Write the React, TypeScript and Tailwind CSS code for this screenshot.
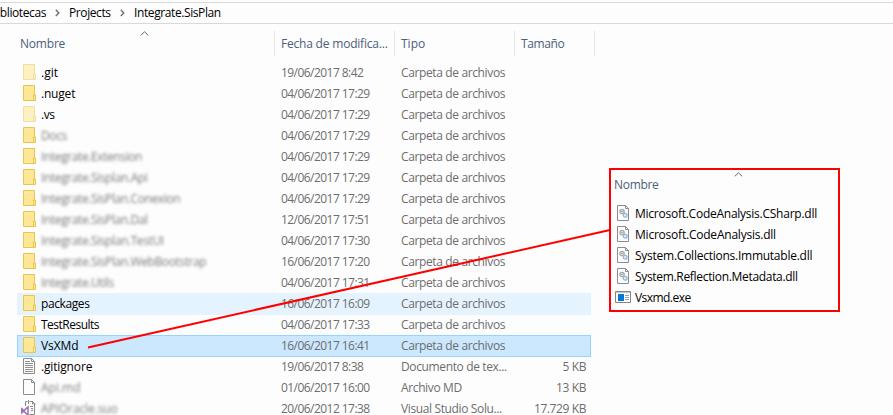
import React from 'react';

type Kind = 'folder' | 'faded' | 'text' | 'blank' | 'solution' | 'dll' | 'exe';

interface Entry {
  name: string;
  date: string;
  type: string;
  size?: string;
  kind: Kind;
  blurred?: boolean;
  state?: 'hover' | 'selected';
  track?: string;
}

const FOLDER = 'Carpeta de archivos';

const entries: Entry[] = [
  { name: '.git', date: '19/06/2017 8:42', type: FOLDER, kind: 'faded', track: 'tracking-normal' },
  { name: '.nuget', date: '04/06/2017 17:29', type: FOLDER, kind: 'folder', track: 'tracking-[-0.2px]' },
  { name: '.vs', date: '04/06/2017 17:29', type: FOLDER, kind: 'faded', track: 'tracking-[-0.4px]' },
  { name: 'Docs', date: '04/06/2017 17:29', type: FOLDER, kind: 'folder', blurred: true },
  { name: 'Integrate.Extension', date: '04/06/2017 17:29', type: FOLDER, kind: 'folder', blurred: true },
  { name: 'Integrate.Sisplan.Api', date: '04/06/2017 17:29', type: FOLDER, kind: 'folder', blurred: true },
  { name: 'Integrate.SisPlan.Conexion', date: '04/06/2017 17:29', type: FOLDER, kind: 'folder', blurred: true },
  { name: 'Integrate.SisPlan.Dal', date: '12/06/2017 17:51', type: FOLDER, kind: 'folder', blurred: true },
  { name: 'Integrate.Sisplan.TestUI', date: '04/06/2017 17:30', type: FOLDER, kind: 'folder', blurred: true },
  { name: 'Integrate.SisPlan.WebBootstrap', date: '16/06/2017 17:20', type: FOLDER, kind: 'folder', blurred: true },
  { name: 'Integrate.Utils', date: '04/06/2017 17:31', type: FOLDER, kind: 'folder', blurred: true },
  { name: 'packages', date: '16/06/2017 16:09', type: FOLDER, kind: 'folder', state: 'hover' },
  { name: 'TestResults', date: '04/06/2017 17:33', type: FOLDER, kind: 'folder', track: 'tracking-[-0.5px]' },
  { name: 'VsXMd', date: '16/06/2017 16:41', type: FOLDER, kind: 'folder', state: 'selected', track: 'tracking-[-0.1px]' },
  { name: '.gitignore', date: '19/06/2017 8:38', type: 'Documento de tex...', size: '5 KB', kind: 'text', track: 'tracking-[-0.15px]' },
  { name: 'Api.md', date: '01/06/2017 16:00', type: 'Archivo MD', size: '13 KB', kind: 'blank', blurred: true, track: 'tracking-normal' },
  { name: 'APIOracle.suo', date: '20/06/2012 17:38', type: 'Visual Studio Solu...', size: '17.729 KB', kind: 'solution', blurred: true, track: 'tracking-[-0.1px]' },
];

const libraries: { name: string; kind: Kind; track: string }[] = [
  { name: 'Microsoft.CodeAnalysis.CSharp.dll', kind: 'dll', track: 'tracking-[-0.25px]' },
  { name: 'Microsoft.CodeAnalysis.dll', kind: 'dll', track: 'tracking-[-0.22px]' },
  { name: 'System.Collections.Immutable.dll', kind: 'dll', track: 'tracking-[-0.25px]' },
  { name: 'System.Reflection.Metadata.dll', kind: 'dll', track: 'tracking-[-0.32px]' },
  { name: 'Vsxmd.exe', kind: 'exe', track: 'tracking-[-0.55px]' },
];

function Page({ children }: { children?: React.ReactNode }) {
  return (
    <>
      <path d="M2.5.5h8l3 3v12h-11z" fill="#fdfdfd" stroke="#8c8c8c" />
      <path d="M10.5.5v3h3" fill="none" stroke="#8c8c8c" />
      {children}
    </>
  );
}

function FileIcon({ kind }: { kind: Kind }) {
  return (
    <svg width="16" height="16" viewBox="0 0 16 16" className="mt-px shrink-0">
      {(kind === 'folder' || kind === 'faded') && (
        <g opacity={kind === 'faded' ? 0.55 : 1}>
          <path d="M2.5.5h11v15h-11z" fill="#fee794" stroke="#eac54f" />
          <path d="M12.5 15.5v-5.5h2v5.5z" fill="#fee794" stroke="#eac54f" />
          <path d="M4 2h1v1H4zM6 2h1v1H6zM9 13h1v1H9zM11 12h1v1h-1z" fill="#fff3c6" />
        </g>
      )}
      {kind === 'text' && (
        <Page>
          <path d="M4 3.5h5M4 5.5h8M4 7.5h8M4 9.5h8M4 11.5h8M4 13.5h8" stroke="#929292" />
        </Page>
      )}
      {kind === 'blank' && <Page />}
      {kind === 'dll' && (
        <Page>
          <circle cx="7" cy="6.5" r="2.2" fill="#eeeeee" stroke="#a3a9ae" strokeWidth="1.3" />
          <circle cx="7" cy="6.5" r=".8" fill="#888f95" />
          <circle cx="10.2" cy="10.2" r="1.9" fill="#e1f0fb" stroke="#91b9d9" strokeWidth="1.3" />
        </Page>
      )}
      {kind === 'exe' && (
        <>
          <path d="M.5 2.5h15v11H.5z" fill="#fff" stroke="#858585" />
          <path d="M1 3.5h14" stroke="#c5c5c5" />
          <path d="M3 5h6v7H3z" fill="#0878d7" />
          <path d="M10 6.5h4M10 8.5h4M10 10.5h4" stroke="#8fa5b8" />
        </>
      )}
      {kind === 'solution' && (
        <>
          <path d="M4.5 6V1.5h2m2 0h3l2 2v11h-5" fill="none" stroke="#8c8c8c" />
          <path d="M7.5 0v4M11.5 1v3h3M9 6.5h3M10 8.5h2M10 10.5h2" fill="none" stroke="#8c8c8c" />
          <path d="M.8 8.8v4l2.6-2zM7 7v8L2.4 11z" fill="none" stroke="#9b72b6" strokeWidth="1.5" />
        </>
      )}
    </svg>
  );
}

function SortCaret({ className }: { className: string }) {
  return (
    <svg width="9" height="5" viewBox="0 0 9 5" className={className}>
      <path d="M.8 4.3 4.5.8l3.7 3.5" fill="none" stroke="#666" />
    </svg>
  );
}

function Crumb() {
  return (
    <svg width="5" height="8" viewBox="0 0 5 8" className="shrink-0">
      <path d="m.8.8 3 3.1-3 3.1" fill="none" stroke="#707070" strokeWidth="1.4" />
    </svg>
  );
}

function Row({ entry }: { entry: Entry }) {
  const back =
    entry.state === 'hover'
      ? 'bg-[#e5f3ff]'
      : entry.state === 'selected'
        ? 'bg-[#cce8ff] outline outline-1 -outline-offset-1 outline-[#99d1ff]'
        : '';
  const tone = entry.blurred ? 'inline-block text-[#4c504c] opacity-75 blur-[1.6px]' : 'text-black';
  return (
    <div className={`-mb-px ml-[17px] flex h-[22px] w-[574px] shrink-0 pl-1 pt-px text-[#6d6d6d] ${back}`}>
      <FileIcon kind={entry.kind} />
      <div className="w-[236px] pl-1">
        <span className={`${tone} ${entry.track ?? 'tracking-[-0.4px]'}`}>{entry.name}</span>
      </div>
      <div className="w-[120px] pl-2 tracking-[-0.55px]">{entry.date}</div>
      <div className="w-[120px] pl-2 tracking-[-0.37px]">{entry.type}</div>
      <div className="w-[73px] text-right tracking-[-0.4px]">{entry.size}</div>
    </div>
  );
}

export default function App() {
  return (
    <div className="relative flex h-[415px] w-[893px] flex-col overflow-hidden bg-[#fdfdfd] font-['Open_Sans','Noto_Sans',sans-serif] text-[12px] leading-[20px] whitespace-nowrap">
      <div className="mt-[2px] flex h-[22px] shrink-0 items-center border-y border-[#d9d9d9] text-black tracking-[-0.4px]">
        <div className="flex w-[55px]">
          <span className="flex w-[46px] justify-end">Bibliotecas</span>
        </div>
        <Crumb />
        <span className="ml-[9px] w-[51px]">Projects</span>
        <Crumb />
        <span className="ml-[9px]">Integrate.SisPlan</span>
      </div>

      <div className="mt-[7px] flex h-[25px] shrink-0 items-center leading-[26px] tracking-[-0.2px] text-[#4c607a]">
        <div className="relative h-[25px] w-[275px] border-r border-[#e5e5e5] pl-5">
          Nombre
          <SortCaret className="absolute left-[140px] top-0" />
        </div>
        <div className="h-[25px] w-[120px] border-r border-[#e5e5e5] pl-1.5">Fecha de modifica...</div>
        <div className="h-[25px] w-[120px] border-r border-[#e5e5e5] pl-1.5 tracking-normal">Tipo</div>
        <div className="h-[25px] w-[80px] border-r border-[#e5e5e5] pl-1.5 tracking-[-0.4px]">Tamaño</div>
      </div>

      <div className="mt-[6px] flex flex-col">
        {entries.map((entry) => (
          <Row key={entry.name} entry={entry} />
        ))}
      </div>

      <svg width="893" height="415" className="pointer-events-none absolute left-0 top-0">
        <path d="M88 347.5 610 230" stroke="#fe0000" strokeWidth="2" />
      </svg>

      <div className="absolute left-[609px] top-[168px] flex h-[144px] w-[231px] flex-col border-2 border-[#fe0000] bg-[#fdfdfd]">
        <div className="relative h-[33px] pl-[3px] pt-[5px] tracking-[-0.3px] text-[#4c607a]">
          Nombre
          <SortCaret className="absolute left-[123px] top-[2px]" />
        </div>
        {libraries.map((lib) => (
          <div key={lib.name} className="flex h-[21px] items-start pl-1 pt-px leading-[19px]">
            <FileIcon kind={lib.kind} />
            <span className={`pl-1 text-black ${lib.track}`}>{lib.name}</span>
          </div>
        ))}
      </div>
    </div>
  );
}
